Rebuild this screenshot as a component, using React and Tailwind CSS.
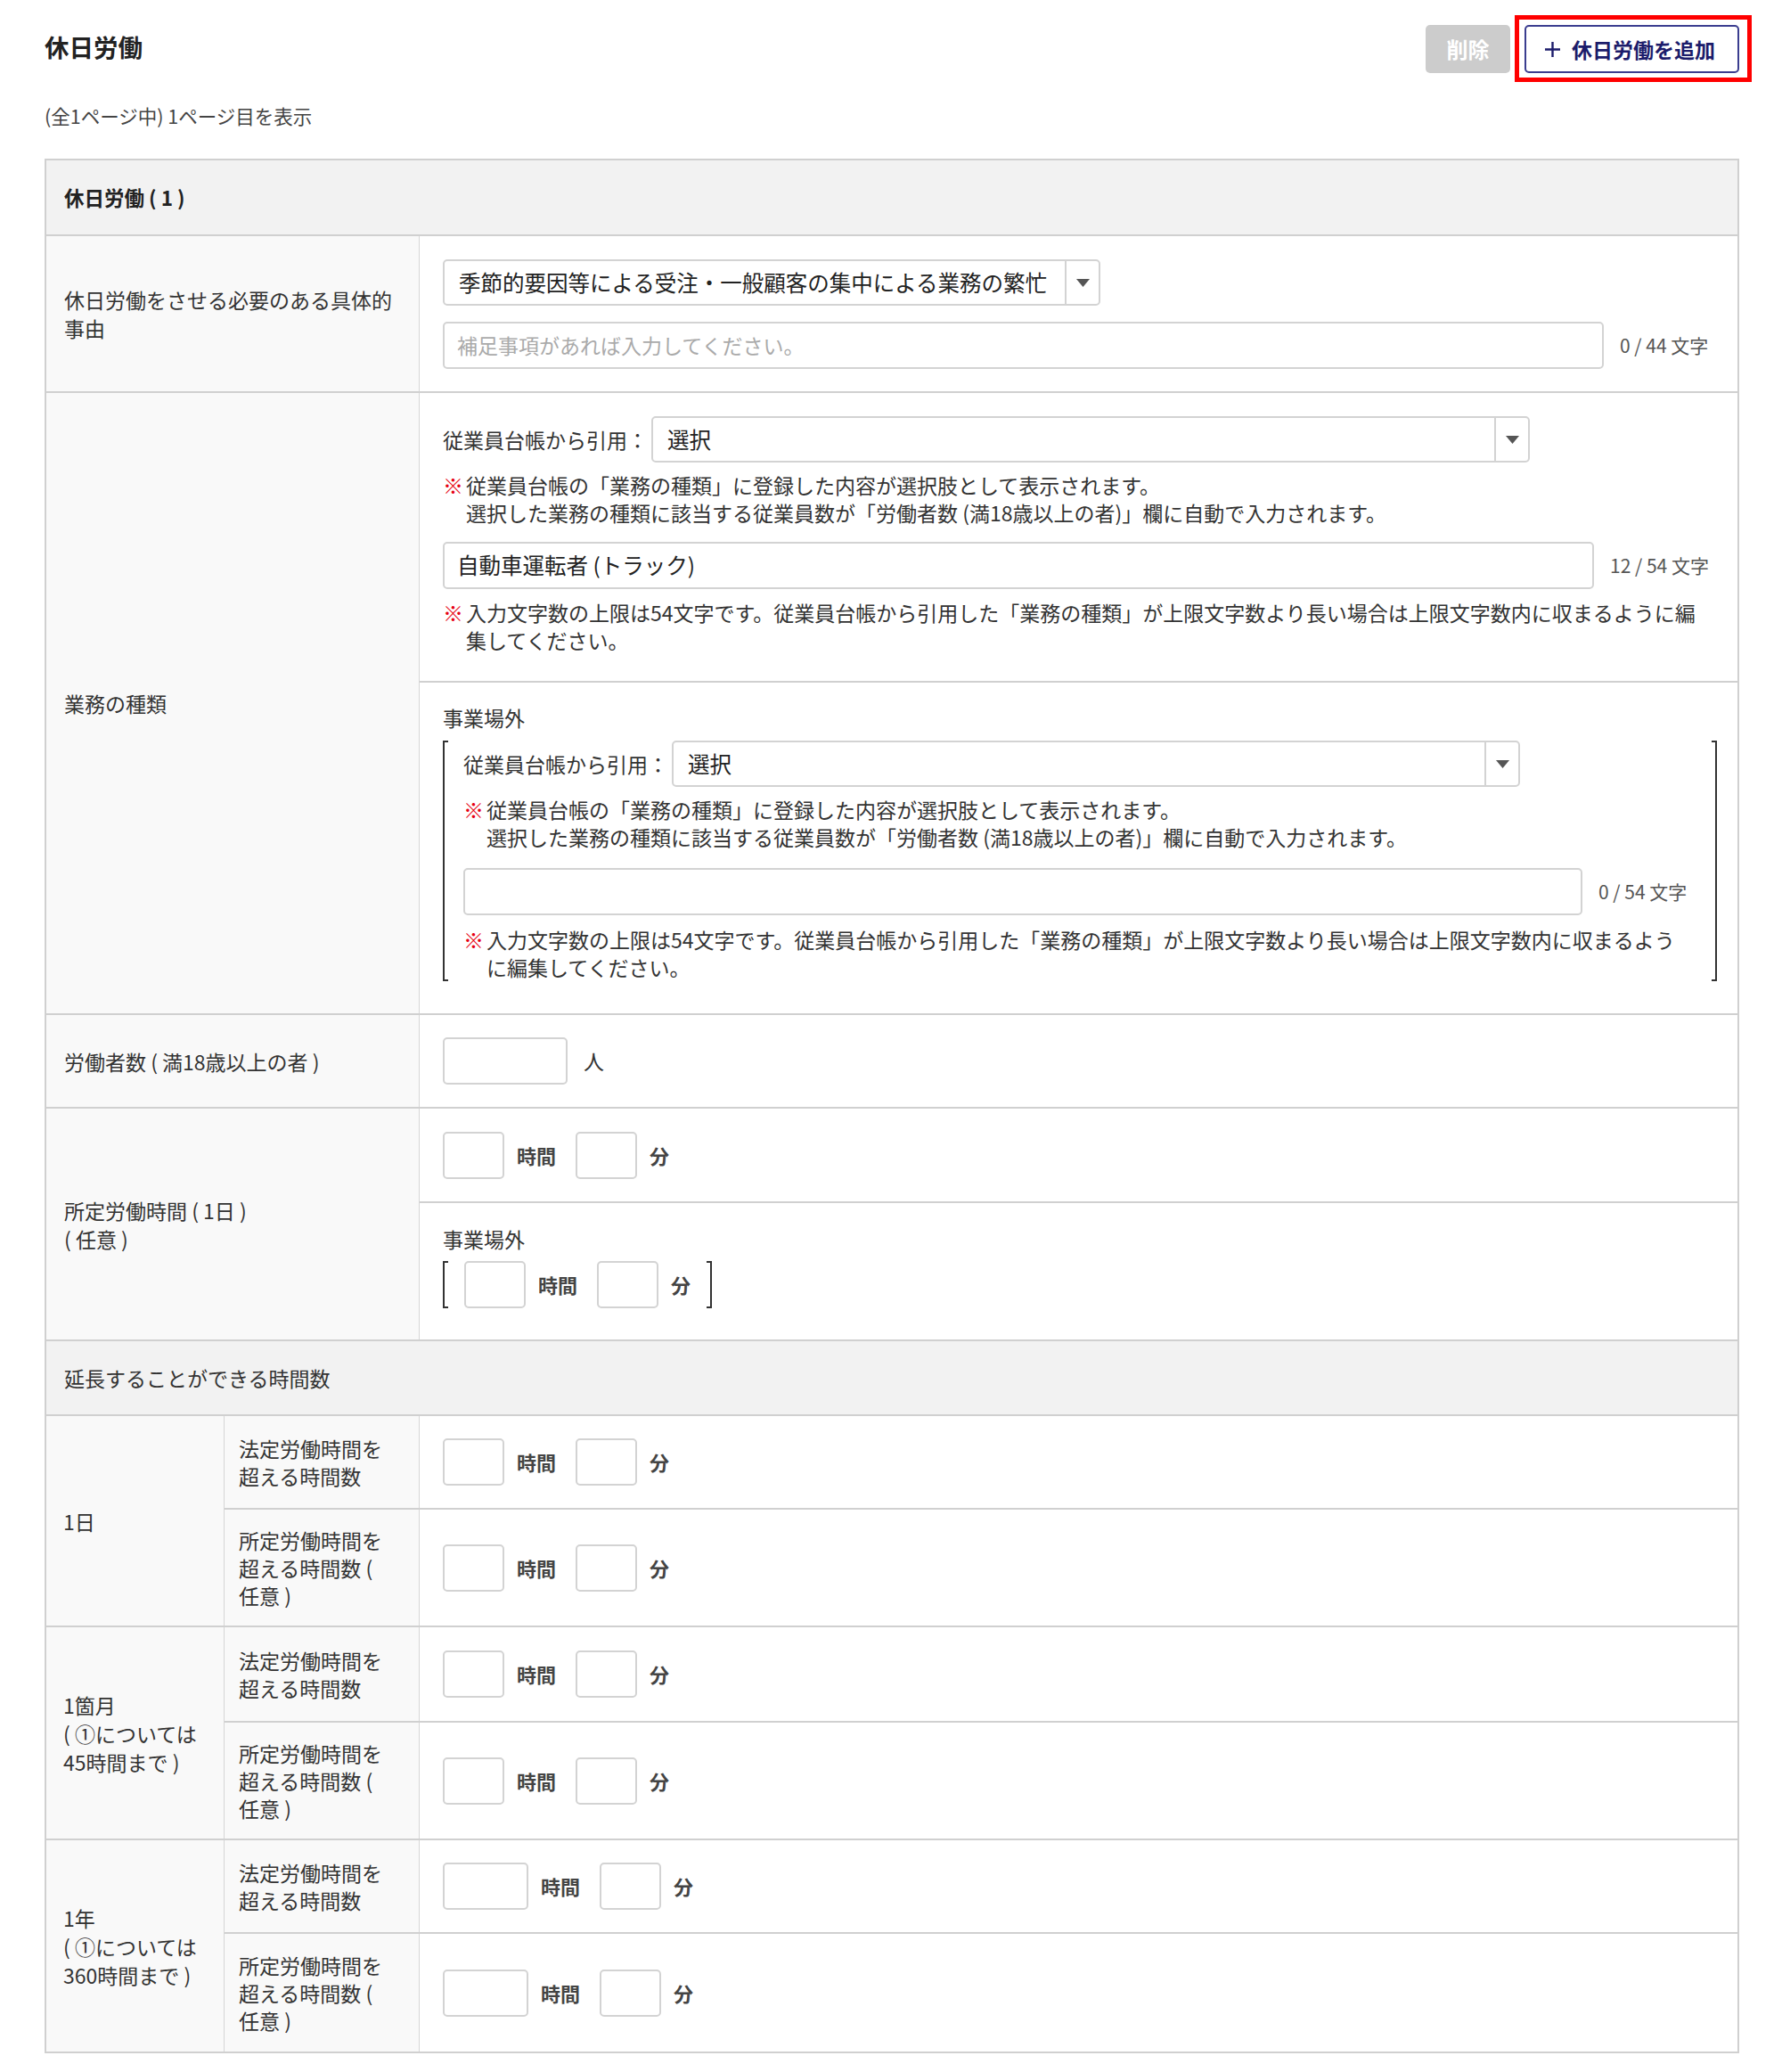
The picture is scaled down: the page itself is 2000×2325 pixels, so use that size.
import React from 'react';

const LINE = 'border-[#d0d0d0]';

const Arrow = () => (
  <svg width="15" height="9" viewBox="0 0 15 9">
    <path d="M0 0H15L7.5 9Z" fill="#555" />
  </svg>
);

const Select = ({ value, className }) => (
  <div className={`flex h-[52px] rounded-[5px] border-2 border-[#d3d3d3] bg-white ${className}`}>
    <div className="flex flex-1 items-center overflow-hidden whitespace-nowrap pl-[16px] text-[24.5px] text-[#222]">{value}</div>
    <div className="flex w-[38px] items-center justify-center border-l-2 border-[#d3d3d3]">
      <Arrow />
    </div>
  </div>
);

const TextBox = ({ value, placeholder, className }) => (
  <div className={`flex h-[53px] items-center rounded-[5px] border-2 border-[#d3d3d3] bg-white pl-[14px] ${className}`}>
    {value ? (
      <span className="whitespace-nowrap text-[24.5px] text-[#222]">{value}</span>
    ) : (
      <span className="whitespace-nowrap text-[23px] text-[#aaaaaa]">{placeholder}</span>
    )}
  </div>
);

const Counter = ({ children }) => (
  <span className="ml-[18px] whitespace-nowrap text-[21px] text-[#555]">{children}</span>
);

const Note = ({ lines }) => (
  <div className="flex text-[23px] leading-[31px] text-[#333]">
    <span className="w-[26px] shrink-0 text-[#e60012]">※</span>
    <div>
      {lines.map((l, i) => (
        <div key={i} className="whitespace-nowrap">{l}</div>
      ))}
    </div>
  </div>
);

const Box = ({ className }) => (
  <div className={`h-[53px] rounded-[5px] border-2 border-[#d3d3d3] bg-white ${className}`} />
);

const Time = ({ w1 = 'w-[69px]' }) => (
  <div className="flex items-center">
    <Box className={w1} />
    <span className="ml-[14px] text-[22px] font-bold text-[#444]">時間</span>
    <Box className="ml-[22px] w-[69px]" />
    <span className="ml-[14px] text-[22px] font-bold text-[#444]">分</span>
  </div>
);

// bracket drawn as two narrow boxes with three borders each
const Bracket = ({ children, className, inner }) => (
  <div className={`flex ${className}`}>
    <div className="w-[6px] shrink-0 border-y-2 border-l-2 border-[#333]" />
    <div className={`flex-1 ${inner}`}>{children}</div>
    <div className="w-[6px] shrink-0 border-y-2 border-r-2 border-[#333]" />
  </div>
);

const Row = ({ label, className, children }) => (
  <div className={`flex border-t-2 ${LINE} ${className}`}>
    <div className="flex w-[419px] shrink-0 items-center border-r border-[#d6d6d6] bg-[#f9f9f9] px-[20px] text-[23px] leading-[32px]">
      <div>{label}</div>
    </div>
    <div className="min-w-0 flex-1">{children}</div>
  </div>
);

const Group = ({ label, rows }) => (
  <div className={`flex border-t-2 ${LINE}`}>
    <div className="flex w-[200px] shrink-0 items-center border-r border-[#d6d6d6] bg-[#f9f9f9] pl-[19px] text-[23px] leading-[32px]">
      <div>{label}</div>
    </div>
    <div className="flex-1">
      {rows.map((r, i) => (
        <div key={i} className={`flex ${r.h} ${i > 0 ? 'border-t-2 border-[#d0d0d0]' : ''}`}>
          <div className="flex w-[219px] shrink-0 items-center border-r border-[#d6d6d6] bg-[#f9f9f9] pl-[16px] text-[23px] leading-[31px]">
            <div>{r.label}</div>
          </div>
          <div className="flex flex-1 items-center pl-[26px]">
            <Time w1={r.w1} />
          </div>
        </div>
      ))}
    </div>
  </div>
);

const legal = (
  <>
    法定労働時間を
    <br />
    超える時間数
  </>
);
const fixed = (
  <>
    所定労働時間を
    <br />
    超える時間数 (
    <br />
    任意 )
  </>
);

export default function App() {
  return (
    <div className="min-h-[2325px] bg-white pb-[20px] pl-[50px] pr-[48px] pt-[28px] font-['Noto_Sans_CJK_JP','Noto_Sans',sans-serif] text-[#333]">
      <div className="flex h-[54px] items-center justify-between">
        <h1 className="-mt-[4px] text-[27.5px] font-bold text-[#222]">休日労働</h1>
        <div className="flex items-center">
          <button className="h-[54px] w-[95px] rounded-[5px] bg-[#cccccc] text-[24px] font-bold text-white">削除</button>
          <div className="relative ml-[16px]">
            <button className="flex h-[54px] w-[241px] items-center rounded-[5px] border-2 border-[#3b3d8f] bg-white pl-[20px] text-[23px] font-bold text-[#1c1c6b]">
              <svg width="19" height="19" viewBox="0 0 19 19" className="mr-[12px]">
                <path d="M9.5 1V18M1 9.5H18" stroke="#1c1c6b" strokeWidth="2.4" />
              </svg>
              休日労働を追加
            </button>
            <div className="pointer-events-none absolute -bottom-[10px] -left-[11px] -right-[14px] -top-[11px] border-[5px] border-[#ff0000]" />
          </div>
        </div>
      </div>

      <p className="mt-[33px] text-[21.5px] leading-[30px] text-[#444]">(全1ページ中) 1ページ目を表示</p>

      <div className={`mt-[33px] border-2 ${LINE}`}>
        <div className="flex h-[83px] items-center bg-[#f2f2f2] pl-[20px] text-[22.5px] font-bold text-[#222]">休日労働 ( 1 )</div>

        <Row
          className="h-[176px]"
          label={
            <>
              休日労働をさせる必要のある具体的
              <br />
              事由
            </>
          }
        >
          <div className="pl-[26px] pt-[26px]">
            <Select className="w-[738px]" value="季節的要因等による受注・一般顧客の集中による業務の繁忙" />
            <div className="mt-[18px] flex items-center">
              <TextBox className="w-[1303px]" placeholder="補足事項があれば入力してください。" />
              <Counter>0 / 44 文字</Counter>
            </div>
          </div>
        </Row>

        <Row className="h-[698px]" label="業務の種類">
          <div className="h-[323px] pl-[26px] pt-[26px]">
            <div className="flex items-center">
              <span className="whitespace-nowrap text-[23px]">従業員台帳から引用：</span>
              <Select className="ml-[4px] w-[986px]" value="選択" />
            </div>
            <div className="mt-[10px]">
              <Note
                lines={[
                  '従業員台帳の「業務の種類」に登録した内容が選択肢として表示されます。',
                  '選択した業務の種類に該当する従業員数が「労働者数 (満18歳以上の者)」欄に自動で入力されます。',
                ]}
              />
            </div>
            <div className="mt-[17px] flex items-center">
              <TextBox className="w-[1292px]" value="自動車運転者 (トラック)" />
              <Counter>12 / 54 文字</Counter>
            </div>
            <div className="mt-[11px]">
              <Note
                lines={[
                  '入力文字数の上限は54文字です。従業員台帳から引用した「業務の種類」が上限文字数より長い場合は上限文字数内に収まるように編',
                  '集してください。',
                ]}
              />
            </div>
          </div>
          <div className={`h-[373px] border-t-2 ${LINE} pl-[26px] pr-[23px] pt-[23px]`}>
            <div className="text-[23px] leading-[32px]">事業場外</div>
            <Bracket className="mt-[10px]" inner="pl-[17px] pr-[19px]">
              <div className="flex items-center">
                <span className="whitespace-nowrap text-[23px]">従業員台帳から引用：</span>
                <Select className="ml-[4px] w-[952px]" value="選択" />
              </div>
              <div className="mt-[10px]">
                <Note
                  lines={[
                    '従業員台帳の「業務の種類」に登録した内容が選択肢として表示されます。',
                    '選択した業務の種類に該当する従業員数が「労働者数 (満18歳以上の者)」欄に自動で入力されます。',
                  ]}
                />
              </div>
              <div className="mt-[19px] flex items-center">
                <TextBox className="w-[1256px]" />
                <Counter>0 / 54 文字</Counter>
              </div>
              <div className="mt-[12px]">
                <Note
                  lines={[
                    '入力文字数の上限は54文字です。従業員台帳から引用した「業務の種類」が上限文字数より長い場合は上限文字数内に収まるよう',
                    'に編集してください。',
                  ]}
                />
              </div>
            </Bracket>
          </div>
        </Row>

        <Row className="h-[105px]" label="労働者数 ( 満18歳以上の者 )">
          <div className="flex h-full items-center pl-[26px]">
            <Box className="w-[140px]" />
            <span className="ml-[18px] text-[23px]">人</span>
          </div>
        </Row>

        <Row
          className="h-[261px]"
          label={
            <>
              所定労働時間 ( 1日 )
              <br />( 任意 )
            </>
          }
        >
          <div className="flex h-[104px] items-center pl-[26px]">
            <Time />
          </div>
          <div className={`h-[155px] border-t-2 ${LINE} pl-[26px] pt-[24px]`}>
            <div className="text-[23px] leading-[32px]">事業場外</div>
            <Bracket className="mt-[9px] w-fit" inner="pl-[18px] pr-[18px]">
              <Time />
            </Bracket>
          </div>
        </Row>

        <div className={`flex h-[84px] items-center border-t-2 ${LINE} bg-[#f2f2f2] pl-[20px] text-[23px]`}>
          延長することができる時間数
        </div>

        <Group
          label="1日"
          rows={[
            { h: 'h-[103px]', label: legal },
            { h: 'h-[132px]', label: fixed },
          ]}
        />
        <Group
          label={
            <>
              1箇月
              <br />( ①については
              <br />
              45時間まで )
            </>
          }
          rows={[
            { h: 'h-[105px]', label: legal },
            { h: 'h-[132px]', label: fixed },
          ]}
        />
        <Group
          label={
            <>
              1年
              <br />( ①については
              <br />
              360時間まで )
            </>
          }
          rows={[
            { h: 'h-[103px]', label: legal, w1: 'w-[96px]' },
            { h: 'h-[134px]', label: fixed, w1: 'w-[96px]' },
          ]}
        />
      </div>
    </div>
  );
}
